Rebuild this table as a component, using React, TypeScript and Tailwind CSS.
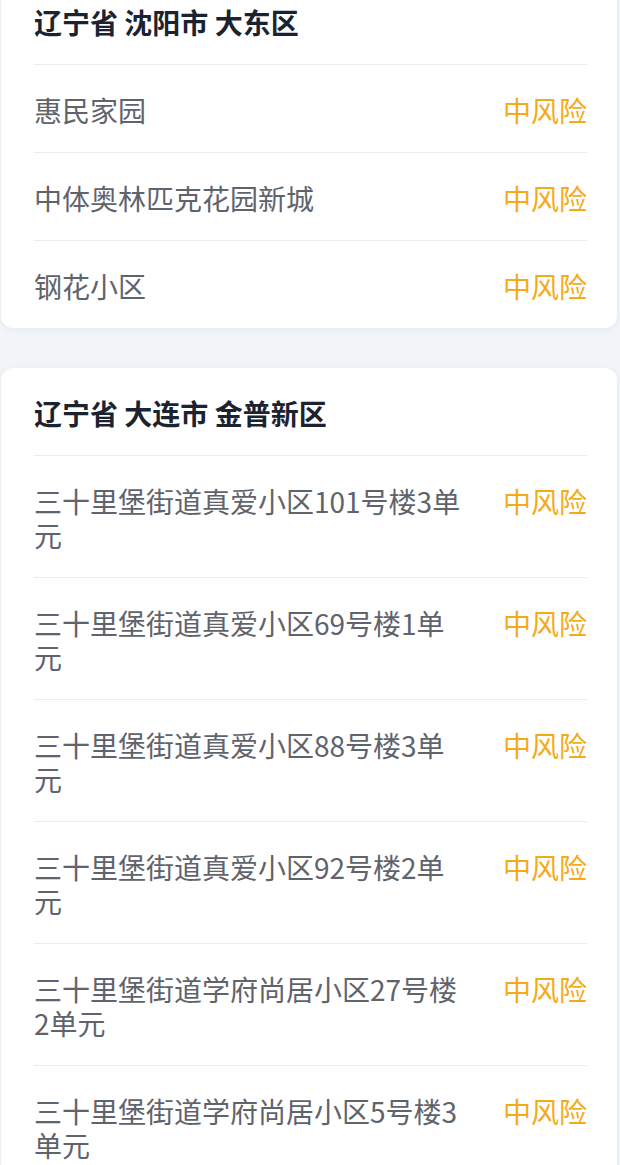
import React from "react";

type Group = { title: string; items: string[] };

const groups: Group[] = [
  { title: "辽宁省 沈阳市 大东区", items: ["惠民家园", "中体奥林匹克花园新城", "钢花小区"] },
  {
    title: "辽宁省 大连市 金普新区",
    items: [
      "三十里堡街道真爱小区101号楼3单元",
      "三十里堡街道真爱小区69号楼1单元",
      "三十里堡街道真爱小区88号楼3单元",
      "三十里堡街道真爱小区92号楼2单元",
      "三十里堡街道学府尚居小区27号楼2单元",
      "三十里堡街道学府尚居小区5号楼3单元",
    ],
  },
];

function Card({ g }: { g: Group }) {
  return (
    <div className="ml-[1px] mr-[3px] rounded-[12px] bg-white pl-[33px] pr-[30px] shadow-[0_1px_6px_rgba(30,50,90,0.06)]">
      <div className="border-b border-[#ececee] pt-[28px] pb-[25px] text-[28px] font-bold leading-[34px] text-[#1b2230]">
        {g.title}
      </div>
      {g.items.map((it, i) => (
        <div
          key={i}
          className={
            "flex items-start pt-[28px] pb-[25px] " +
            (i < g.items.length - 1 ? "border-b border-[#ececee]" : "")
          }
        >
          <div className="flex-1 text-[28px] leading-[34px] text-[#5f636c]">{it}</div>
          <div className="ml-[38px] shrink-0 text-[28px] leading-[34px] text-[#f5aa1a]">中风险</div>
        </div>
      ))}
    </div>
  );
}

export default function App() {
  return (
    <div
      className="h-[1165px] w-[620px] overflow-hidden bg-[#f1f4f8]"
      style={{ fontFamily: '"Noto Sans CJK SC", "Noto Sans", sans-serif' }}
    >
      <div className="-mt-[23px] flex flex-col gap-[40px]">
        {groups.map((g, i) => (
          <Card key={i} g={g} />
        ))}
      </div>
    </div>
  );
}
